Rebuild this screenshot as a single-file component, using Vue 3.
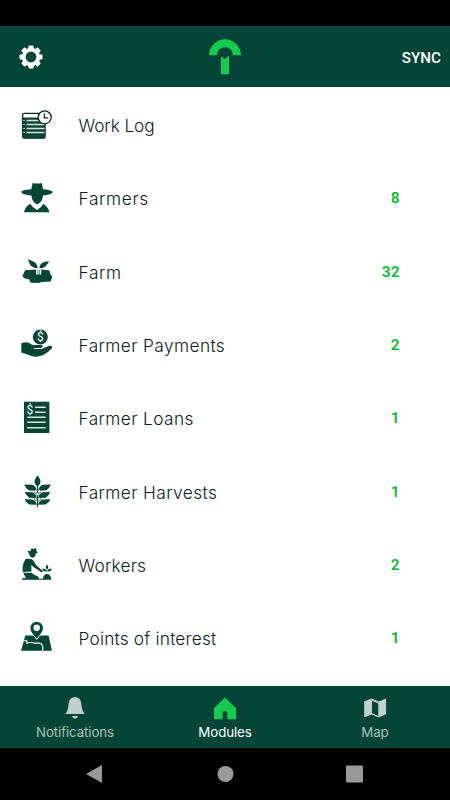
<script setup>
import { ref } from 'vue';

const modules = [
  { id: 'worklog', label: 'Work Log' },
  { id: 'farmers', label: 'Farmers', count: 8 },
  { id: 'farm', label: 'Farm', count: 32 },
  { id: 'payments', label: 'Farmer Payments', count: 2 },
  { id: 'loans', label: 'Farmer Loans', count: 1 },
  { id: 'harvests', label: 'Farmer Harvests', count: 1 },
  { id: 'workers', label: 'Workers', count: 2 },
  { id: 'poi', label: 'Points of interest', count: 1 },
];

const tabs = [
  { id: 'notifications', label: 'Notifications' },
  { id: 'modules', label: 'Modules' },
  { id: 'map', label: 'Map' },
];

const activeTab = ref('modules');
</script>

<template>
  <div class="screen">
    <div class="status-bar"></div>
    <header class="header">
      <button class="settings" aria-label="Settings">
        <svg width="24" height="24" viewBox="0 0 24 24">
          <g fill="#fff">
            <rect v-for="n in 4" :key="n" x="9.4" y="0.5" width="5.2" height="23" rx="1" :transform="`rotate(${n * 45} 12 12)`" />
            <circle cx="12" cy="12" r="9.2" />
          </g>
          <circle cx="12" cy="12" r="5.4" fill="#054537" />
        </svg>
      </button>
      <svg class="logo" width="34" height="38" viewBox="0 0 34 38">
        <path d="M1 17.2a16 16 0 0 1 32 0h-8a8 8 0 0 0-16 0z" />
        <path d="M13 18.7l1.300.4 2.700 2 2.500-2.700 1.500-.6v18.500h-8z" />
      </svg>
      <button class="sync">SYNC</button>
    </header>

    <main class="list">
      <div v-for="item in modules" :key="item.id" class="row">
        <svg class="icon" width="36" height="36" viewBox="0 0 36 36">
          <template v-if="item.id === 'worklog'">
            <rect x="3.6" y="6.3" width="22.4" height="24.7" rx="2" fill="#fff" stroke="#0b2c22" stroke-width="1.3" />
            <path d="M3.600 10.500h22.700v21H5.300q-2 0-2-2z" />
            <path d="M7.500 13.500h18M7.500 17.500h18M7.500 21.500h18M7.500 25.500h18" stroke="#d9dfdc" stroke-width="1.500" />
            <path d="M4.200 13.500h1.500M4.200 17.500h1.500M4.200 21.500h1.500M4.200 25.500h1.500" stroke="#d9dfdc" stroke-width="1.200" />
            <circle cx="25.700" cy="10.300" r="6.500" fill="#fff" stroke="#0b2c22" stroke-width="1.300" />
            <path d="M25.300 6.200v4.600h4" fill="none" stroke="#0b2c22" stroke-width="1.200" />
          </template>
          <template v-else-if="item.id === 'farmers'">
            <path d="M13.700 3q4.500 1 9 0 .9 3 1.300 6.300c5 .3 9.700 1.400 9.700 2.800 0 1.600-4.400 3-9.700 3.400-.2 4-2.500 7.500-5.800 8.900-3.400-1.400-5.500-4.900-5.800-8.900-5.700-.4-10.100-1.800-10.100-3.400 0-1.400 4.500-2.500 10.100-2.800q.3-3.300 1.300-6.300z" />
            <path d="M5 32.300q1-5.200 6.200-8.500 2 3.900 6.900 6.200 4.500-2.300 6.200-6.200 5 3 6 8.500z" />
          </template>
          <template v-else-if="item.id === 'farm'">
            <path d="M9.200 5c2.500 2.200 8.800 1.800 9.600 9.200-5.800-.2-9-3.500-9.600-9.200zM30.200 7.600c-5.600-.5-9.600 1.700-9.700 6.600 5.600.5 7-3.200 9.700-6.600z" />
            <path d="M6 16.200l11-.7v5h1.600V16h2v4.500h1.600v-5l8 .7 1.300 4.400 1.800 1.800-1.600 5.200-9 .3-3 1-8-.2-1.900-3.600-3.500-.4-3-2.500 1.300-2.800z" />
            <path d="M18 14.500l1.600 1v5M21.300 14.500l-1.700 1" fill="none" stroke="#fff" stroke-width=".9" />
          </template>
          <template v-else-if="item.id === 'payments'">
            <circle cx="21.300" cy="10" r="7.500" />
            <text x="21.300" y="14.100" class="coin-sign">$</text>
            <path d="M2.300 16.200q5.500-2 8.800.4c1.400 1 2.600 1.500 5.300 1.500h5.400c2.800 0 2.300 3.100 0 3.100H15v.9h7.200l7.400-3.100c2.500-1 4.500.8 3.100 2.400-3.800 4-7.700 6.600-12.700 7.900-4.200 1.100-8.300-.1-11.600-1.800l-6.100-2z" />
            <path d="M15 21.500h7q2.600-.3 2.800-2" fill="none" stroke="#fff" stroke-width="1" />
          </template>
          <template v-else-if="item.id === 'loans'">
            <rect x="5" y="1.700" width="25.400" height="31.300" />
            <text x="10.800" y="13.600" class="loan-sign">$</text>
            <path d="M16 7.200h10.700M16 12.200h10.700M8.200 17.200h18.500M8.200 22.200h18.500M8.200 27.800h18.500" stroke="#d9e2dd" stroke-width="1.400" />
          </template>
          <template v-else-if="item.id === 'harvests'">
            <path d="M18.500 1.500c-4 4.500-3.900 8 0 11 3.900-3 4-6.500 0-11z" />
            <path d="M5.200 10.400l8.300.3q3.700 1.700 4 5.900l-7.500-.2q-3.300-1.800-4.800-6zM31.800 10.400l-8.300.3q-3.700 1.700-4 5.900l7.500-.2q3.300-1.800 4.800-6z" />
            <path d="M5.800 18.100l7.700.1q3.700 1.700 4 5.700l-7.300-.1q-2.900-1.700-4.400-5.700zM31.200 18.100l-7.700.1q-3.700 1.700-4 5.700l7.300-.1q2.900-1.700 4.400-5.700z" />
            <path d="M5.600 25.300l7.900.2q3.700 1.500 4.300 5.300l-7.500-.2q-3.200-1.600-4.700-5.300zM31.400 25.300l-7.900.2q-3.700 1.500-4.300 5.300l7.500-.2q3.200-1.600 4.700-5.300z" />
            <path d="M18.500 11v22" stroke="#074536" stroke-width="1.200" />
            <g fill="#fff" stroke="#074536" stroke-width=".6">
              <circle cx="16.700" cy="17.400" r="1.600" />
              <circle cx="20.300" cy="17.400" r="1.600" />
              <circle cx="18.500" cy="20.200" r="1.600" />
              <circle cx="16.700" cy="25" r="1.500" />
              <circle cx="20.300" cy="25" r="1.500" />
            </g>
          </template>
          <template v-else-if="item.id === 'workers'">
            <path d="M8.300 3.800l3.300.3.800-2.900 2.400.8 2.100-.9.800 3.400 1.400 1-2.400 1.100c.2 3-1.300 4.400-4 4-1.500-.6-2.300-1.800-2.400-3.400z" />
            <path d="M6.800 11.700l5.400.2c2.500 1 3.400 3.500 4.700 6l7 6.100-1.200 1.600-8.200-5.500-2.100-2.400v6.900l-8.700.3c-.5-5.300.3-9.500 3.100-13.200z" />
            <path d="M4.200 25.800h8.300c1.700 1.200 3.300 2.900 5.700 3.400 1.400.4 1.700 1.600 1.600 2.500h4.100c.4-6.300 7.700-6.400 8.400 0v1H3v-1.400l3.800-.4z" />
            <path d="M28 17.500c-1.800 1.900-1.600 3.800 0 5.200 1.600-1.400 1.800-3.300 0-5.200zM23.200 22c2.300-.6 4.100.2 4.800 2.400-2 .5-3.700-.2-4.800-2.400zM32.800 22c-2.300-.6-4.100.2-4.800 2.400 2 .5 3.700-.2 4.800-2.400z" />
          </template>
          <template v-else>
            <path d="M6.300 15.600h23.300L33 30.700H2z" />
            <path d="M4.500 20.700h3.300v2.600q4-1.500 7.200-.2h5.400q4.700 1 3 7.800" fill="none" stroke="#fff" stroke-width="1.100" />
            <path d="M17.700 18.800c-3.300-4-6.200-7-6.200-10.800a6.200 6.200 0 0 1 12.400 0c0 3.800-2.900 6.800-6.200 10.800z" stroke="#fff" stroke-width="1.500" paint-order="stroke" />
            <circle cx="17.700" cy="7.800" r="3.200" fill="#fff" />
          </template>
        </svg>
        <span class="label" :class="item.id">{{ item.label }}</span>
        <span v-if="item.count" class="count">{{ item.count }}</span>
      </div>
    </main>

    <nav class="tabs">
      <button v-for="tab in tabs" :key="tab.id" class="tab" :class="{ active: tab.id === activeTab }" @click="activeTab = tab.id">
        <svg width="24" height="24" viewBox="0 0 24 24">
          <path v-if="tab.id === 'notifications'" d="M2.300 18C5 14.500 5.200 11.500 5.800 7c.7-4.100 3-5.700 6.200-5.700S17.500 2.900 18.200 7c.6 4.500.8 7.500 3.500 11zM9 20h6q-.6 2.800-3 2.800T9 20z" />
          <path v-else-if="tab.id === 'modules'" d="M12 1.600l11 10.400v11.300h-8.700V17q0-1.900-2.300-1.900T9.700 17v6.300H1V12z" />
          <path v-else fill-rule="evenodd" d="M1.200 5.500L8.500 2.500l7.200 3.100 7.400-3.200v15.900l-7.400 3.300-7.200-3.200-7.300 3.200zM9 4.700v12.600l6.300 2.700V7.500z" />
        </svg>
        <span>{{ tab.label }}</span>
      </button>
    </nav>

    <footer class="system-bar">
      <svg width="20" height="20" viewBox="0 0 20 20"><path d="M18 1v18L2 10z" /></svg>
      <svg width="20" height="20" viewBox="0 0 20 20"><circle cx="10.500" cy="10" r="8" /></svg>
      <svg width="20" height="20" viewBox="0 0 20 20"><rect x="1" y="1.500" width="17" height="17" rx="1" /></svg>
    </footer>
  </div>
</template>

<style>
body {
  background: #000;
}
</style>

<style scoped>
.screen {
  display: flex;
  flex-direction: column;
  width: 450px;
  height: 800px;
  background: #fff;
  overflow: hidden;
}
button {
  padding: 0;
  border: none;
  background: none;
}
.status-bar {
  flex: none;
  height: 26px;
  background: #000;
}
.header {
  box-sizing: border-box;
  flex: none;
  display: grid;
  grid-template-columns: 1fr 34px 1fr;
  align-items: center;
  height: 61px;
  padding: 0 9px 0 19px;
  border-bottom: 1px solid #06382b;
  background: #054537;
}
.settings {
  height: 24px;
  justify-self: start;
  margin-top: 2px;
}
.logo {
  justify-self: center;
  margin: 2px 0 0 -10px;
  fill: #17c951;
}
.sync {
  justify-self: end;
  margin-top: 3px;
  color: #fff;
  font: 500 15.2px/20px Roboto, sans-serif;
}
.list {
  flex: 1;
  padding-top: 1.4px;
  min-height: 0;
}
.row {
  display: flex;
  align-items: center;
  height: 73.33px;
  padding: 0 50px 0 19px;
}
.icon {
  flex: none;
  fill: #074536;
}
.coin-sign,
.loan-sign {
  fill: #fff;
  font-family: Roboto, sans-serif;
  font-size: 12px;
  text-anchor: middle;
}
.label {
  flex: 1;
  margin-left: 23.5px;
  padding-top: 2px;
  color: #0b211b;
  font: 300 17.3px/24px Inter, sans-serif;
  letter-spacing: 0.4px;
  white-space: nowrap;
}
.label.worklog {
  letter-spacing: -0.1px;
}
.label.farmers,
.label.farm {
  letter-spacing: 0.65px;
}
.label.workers {
  letter-spacing: 0.2px;
}
.label.poi {
  letter-spacing: 0.2px;
}
.count {
  color: #0aba32;
  font: 600 15.5px/20px Roboto, sans-serif;
  letter-spacing: 0.3px;
}
.tabs {
  box-sizing: border-box;
  flex: none;
  display: grid;
  grid-template-columns: repeat(3, 1fr);
  height: 62px;
  padding-top: 10px;
  background: #054537;
}
.tab {
  display: flex;
  flex-direction: column;
  align-items: center;
  color: #a9c0b9;
  font: 400 13.3px/24px Inter, sans-serif;
  letter-spacing: -0.1px;
}
.tab svg {
  flex: none;
  fill: #c0d0cb;
}
.tab.active {
  color: #fff;
}
.tab.active svg {
  fill: #17c951;
}
.system-bar {
  box-sizing: border-box;
  flex: none;
  display: flex;
  justify-content: space-between;
  align-items: center;
  height: 52px;
  padding: 0 85px 0 84px;
  background: #000;
}
.system-bar svg {
  fill: #999;
}
</style>
